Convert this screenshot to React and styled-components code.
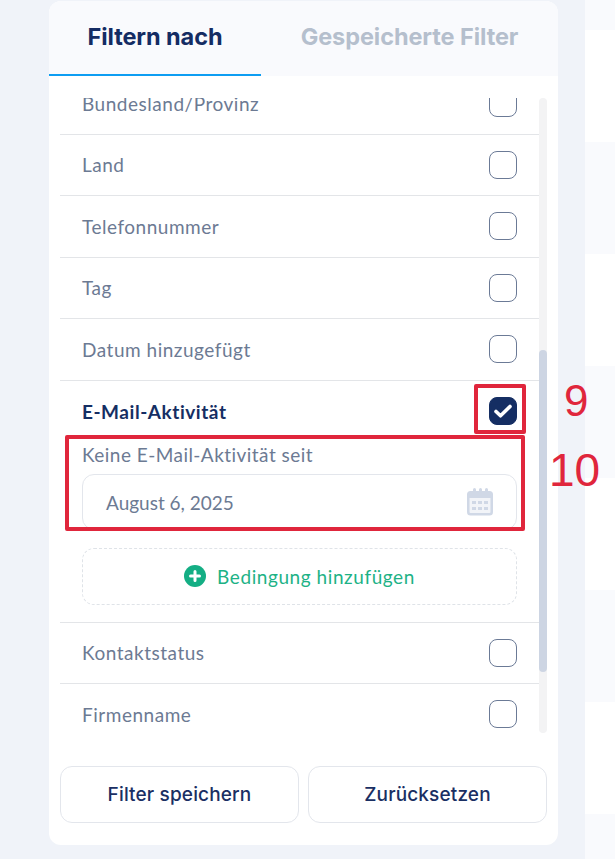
import React from "react";
import styled, { createGlobalStyle } from "styled-components";

const Global = createGlobalStyle`
  html, body { margin: 0; padding: 0; height: 859px; overflow: hidden; background: #f0f3f9; }
  * { box-sizing: border-box; }
  #root { height: 859px; }
`;

const Page = styled.div`
  position: relative;
  width: 615px;
  height: 859px;
  display: flex;
  background: #f0f3f9;
  overflow: hidden;
`;
const Panel = styled.section`
  width: 509px;
  height: 844px;
  margin: 1px 27px 0 49px;
  background: #fff;
  border-radius: 12px;
  display: flex;
  flex-direction: column;
  overflow: hidden;
  flex: none;
`;
const Tabs = styled.div`
  display: flex;
  height: 75px;
  background: #f9fafd;
  flex: none;
`;
const Tab = styled.div`
  width: ${p => p.$w}px;
  height: 75px;
  display: flex;
  align-items: center;
  justify-content: center;
  padding-bottom: 3px;
  font: 700 23.5px "Inter", sans-serif;
  letter-spacing: -0.08px;
  color: ${p => (p.$active ? "#142c63" : "#b5bfcd")};
  border-bottom: 2px solid ${p => (p.$active ? "#0d9df2" : "transparent")};
`;
const ScrollArea = styled.div`
  height: 635px;
  margin: 22px 11px 0;
  display: flex;
  flex: none;
`;
const List = styled.div`
  width: 479px;
  height: 635px;
  overflow: hidden;
  flex: none;
`;
const Scrolled = styled.div`
  margin-top: -25px;
`;
const Row = styled.div`
  height: 61.5px;
  padding: 0 22px;
  display: flex;
  align-items: center;
  justify-content: space-between;
  border-bottom: 1px solid #e3e5e8;
`;
const RowLabel = styled.span`
  font: ${p => (p.$on ? 700 : 400)} 19px "Lato", sans-serif;
  letter-spacing: ${p => (p.$on ? "0.55px" : "0.52px")};
  color: ${p => (p.$on ? "#152e63" : "#6c7a93")};
`;
const Box = styled.span`
  width: 28px;
  height: 28px;
  border-radius: 8px;
  border: 1px solid #6b7a96;
  background: #fff;
  flex: none;
  display: flex;
  align-items: center;
  justify-content: center;
`;
const CheckedBox = styled(Box)`
  background: #152e63;
  border-color: #152e63;
`;
const Expanded = styled.div`
  padding: 0 22px 17px;
  border-bottom: 1px solid #e3e5e8;
`;
const ExpandedHead = styled.div`
  height: 61px;
  display: flex;
  align-items: center;
  justify-content: space-between;
`;
const FieldLabel = styled.div`
  font: 400 19px "Lato", sans-serif;
  letter-spacing: 0.46px;
  line-height: 22px;
  margin-top: 2px;
  color: #6c7a93;
`;
const DateInput = styled.div`
  height: 56px;
  margin-top: 8px;
  border: 1px solid #e3e6ec;
  border-radius: 12px;
  padding: 0 22px 0 23px;
  display: flex;
  align-items: center;
  justify-content: space-between;
  font: 400 19px "Lato", sans-serif;
  color: #6c7a93;
`;
const DateValue = styled.span`
  padding-top: 2px;
`;
const AddButton = styled.div`
  height: 57px;
  margin-top: 18px;
  border: 1px dashed #dfe3e8;
  border-radius: 12px;
  display: flex;
  align-items: center;
  justify-content: center;
  gap: 11px;
  font: 400 19px "Lato", sans-serif;
  letter-spacing: 0.57px;
  color: #1db286;
`;
const Track = styled.div`
  width: 8px;
  height: 635px;
  background: #f3f3f4;
  border-radius: 4px;
  flex: none;
`;
const Thumb = styled.div`
  width: 8px;
  height: 322px;
  margin-top: 252px;
  background: #cdd5e3;
  border-radius: 4px;
`;
const Footer = styled.div`
  display: flex;
  gap: 9px;
  margin: 33px 11px 0;
`;
const Button = styled.button`
  flex: 1;
  height: 57px;
  background: #fff;
  border: 1px solid #e3e6ec;
  border-radius: 12px;
  font: 500 19px "Inter", sans-serif;
  letter-spacing: 0.15px;
  color: #1a2f63;
  padding: 0 0 1px;
`;
const Mark = styled.div`
  position: absolute;
  left: ${p => p.$x}px;
  top: ${p => p.$y}px;
  width: ${p => p.$w}px;
  height: ${p => p.$h}px;
  border: 4px solid #e0263c;
  border-radius: 2px;
`;
const Num = styled.div`
  position: absolute;
  left: ${p => p.$x}px;
  top: ${p => p.$y}px;
  font: 400 ${p => p.$s}px/1 "Liberation Sans", sans-serif;
  color: #e0263c;
`;
const Strip = styled.div`
  position: absolute;
  left: 585px;
  right: 0;
  top: 0;
  bottom: 0;
  display: flex;
  flex-direction: column;
`;
const Band = styled.div`
  height: ${p => p.$h}px;
  flex: none;
  background: ${p => (p.$tint ? "#f9fafd" : "#fff")};
`;

const Check = () => (
  <svg width="18" height="14" viewBox="0 0 18 14" fill="none">
    <path d="M2 7.500l4.500 4.300L16 2.500" stroke="#fff" strokeWidth="3.6" strokeLinecap="round" strokeLinejoin="round" />
  </svg>
);
const Calendar = () => (
  <svg width="28" height="28" viewBox="0 0 28 28">
    <path fill="#d0d8e6" fillRule="evenodd" d="M7 1.5a1.5 1.5 0 0 1 3 0V3h3V1.5a1.5 1.5 0 0 1 3 0V3h3V1.5a1.5 1.5 0 0 1 3 0V3h1.5A3.5 3.5 0 0 1 27 6.5V24a3.5 3.5 0 0 1-3.500 3.500h-19A3.500 3.500 0 0 1 1 24V6.500A3.500 3.500 0 0 1 4.500 3H7zM3.500 10v14a1 1 0 0 0 1 1h19a1 1 0 0 0 1-1V10z" />
    <path fill="#d0d8e6" d="M3 9h22v17H3z" opacity=".28" />
    <path fill="#d0d8e6" d="M6 13h4v3H6zM12 13h4v3h-4zM18 13h4v3h-4zM6 19h4v3H6zM12 19h4v3h-4zM18 19h4v3h-4z" />
  </svg>
);
const Plus = () => (
  <svg width="22" height="22" viewBox="0 0 22 22">
    <circle cx="11" cy="11" r="11" fill="#14ae84" />
    <path d="M11 6.500v9M6.500 11h9" stroke="#fff" strokeWidth="3" strokeLinecap="round" />
  </svg>
);

const before = ["Bundesland/Provinz", "Land", "Telefonnummer", "Tag", "Datum hinzugefügt"];
const after = ["Kontaktstatus", "Firmenname"];
const bands = [[30, 1], [112, 0], [112, 1], [112, 0], [112, 1], [112, 0], [112, 1], [112, 0], [55, 1]];

export default function App() {
  return (
    <Page>
      <Global />
      <Panel>
        <Tabs>
          <Tab $w={212} $active>Filtern nach</Tab>
          <Tab $w={297}>Gespeicherte Filter</Tab>
        </Tabs>
        <ScrollArea>
          <List>
            <Scrolled>
              {before.map(t => (
                <Row key={t}>
                  <RowLabel>{t}</RowLabel>
                  <Box />
                </Row>
              ))}
              <Expanded>
                <ExpandedHead>
                  <RowLabel $on>E-Mail-Aktivität</RowLabel>
                  <CheckedBox><Check /></CheckedBox>
                </ExpandedHead>
                <FieldLabel>Keine E-Mail-Aktivität seit</FieldLabel>
                <DateInput><DateValue>August 6, 2025</DateValue><Calendar /></DateInput>
                <AddButton><Plus />Bedingung hinzufügen</AddButton>
              </Expanded>
              {after.map(t => (
                <Row key={t}>
                  <RowLabel>{t}</RowLabel>
                  <Box />
                </Row>
              ))}
            </Scrolled>
          </List>
          <Track><Thumb /></Track>
        </ScrollArea>
        <Footer>
          <Button>Filter speichern</Button>
          <Button>Zurücksetzen</Button>
        </Footer>
      </Panel>
      <Strip>
        {bands.map(([h, t], i) => <Band key={i} $h={h} $tint={t} />)}
      </Strip>
      <Mark $x={474} $y={384} $w={52} $h={50} />
      <Mark $x={65} $y={435} $w={460} $h={96} />
      <Num $x={564} $y={379} $s={44}>9</Num>
      <Num $x={549} $y={447} $s={46}>10</Num>
    </Page>
  );
}
